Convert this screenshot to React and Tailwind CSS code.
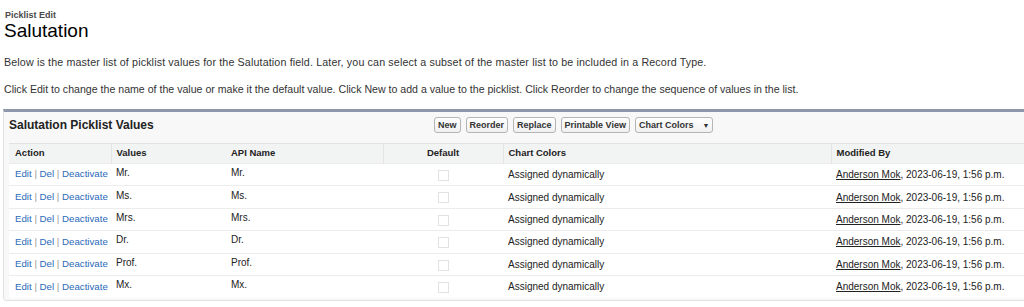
import React from "react";

const rows = ["Mr.", "Ms.", "Mrs.", "Dr.", "Prof.", "Mx."];

function Btn({ children }) {
  return (
    <button className="h-[16px] px-[3px] border border-[#b5b5b5] rounded-[3px] bg-gradient-to-b from-white to-[#f0f0f0] text-[9px] font-bold text-[#333] leading-none flex items-center gap-[9px]">
      {children}
    </button>
  );
}

export default function App() {
  return (
    <div className="w-[1024px] h-[307px] overflow-hidden bg-white text-[#222]" style={{ fontFamily: '"Liberation Sans", Arial, sans-serif' }}>
      <div className="pl-[5px] pt-[10px]">
        <div className="text-[9px] font-bold text-[#4a4a4a] leading-[11px]">Picklist Edit</div>
        <div className="text-[19px] leading-[20px] text-black -ml-[1px]">Salutation</div>
      </div>
      <p className="pl-[4px] mt-[15px] text-[10.7px] leading-[12px] text-[#333] tracking-[0.14px]">
        Below is the master list of picklist values for the Salutation field. Later, you can select a subset of the master list to be included in a Record Type.
      </p>
      <p className="pl-[4px] mt-[15px] text-[10.6px] leading-[12px] text-[#333]">
        Click Edit to change the name of the value or make it the default value. Click New to add a value to the picklist. Click Reorder to change the sequence of values in the list.
      </p>
      <div className="ml-[3px] mt-[14px] w-[1040px] border-t-[3px] border-t-[#8e98aa] border-x border-b border-[#e0e3e5] rounded-b-[4px] bg-[#f8f8f8] pb-[2px]">
        <div className="h-[31px] flex items-center relative">
          <div className="pl-[5px] pb-[5px] text-[12px] font-bold text-[#222]">Salutation Picklist Values</div>
          <div className="absolute left-[430px] top-[5px] flex gap-[5px]">
            <Btn>New</Btn>
            <Btn>Reorder</Btn>
            <Btn>Replace</Btn>
            <Btn>Printable View</Btn>
            <Btn>
              <span>Chart Colors</span>
              <span className="text-[7px]">▼</span>
            </Btn>
          </div>
        </div>
        <table className="ml-[5px] w-[1030px] border-collapse text-[10px] bg-white">
          <thead>
            <tr className="h-[20px] bg-[#f2f3f3] border-t border-[#e0e3e5] text-left">
              <th className="w-[102px] pl-[6px] font-bold text-[9.5px] text-[#222]">Action</th>
              <th className="w-[114px] pl-[5px] font-bold text-[9.5px] text-[#222] border-l border-[#e5e5e5]">Values</th>
              <th className="w-[158px] pl-[6px] font-bold text-[9.5px] text-[#222]">API Name</th>
              <th className="w-[120px] text-center font-bold text-[9.5px] text-[#222] border-l border-[#e5e5e5]">Default</th>
              <th className="w-[328px] pl-[5px] font-bold text-[9.5px] text-[#222] border-l border-[#e5e5e5]">Chart Colors</th>
              <th className="pl-[5px] font-bold text-[9.5px] text-[#222] border-l border-[#e5e5e5]">Modified By</th>
            </tr>
          </thead>
          <tbody>
            {rows.map((v) => (
              <tr key={v} className="h-[22.4px] border-t border-[#ececec]">
                <td className="pl-[6px] text-[#2a6ab8] whitespace-nowrap text-[9.7px]">
                  Edit <span className="text-[#999]">|</span> Del <span className="text-[#999]">|</span> Deactivate
                </td>
                <td className="pl-[5px] pb-[4px]">{v}</td>
                <td className="pl-[6px] pb-[4px]">{v}</td>
                <td className="text-center">
                  <span className="inline-block w-[11px] h-[11px] border border-[#e2e2e2] align-middle"></span>
                </td>
                <td className="pl-[5px]">Assigned dynamically</td>
                <td className="pl-[5px] whitespace-nowrap">
                  <span className="underline">Anderson Mok</span>, 2023-06-19, 1:56 p.m.
                </td>
              </tr>
            ))}
          </tbody>
        </table>
      </div>
    </div>
  );
}
